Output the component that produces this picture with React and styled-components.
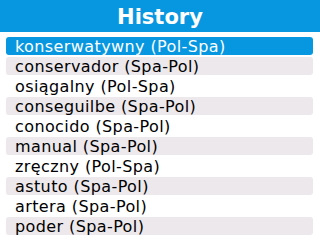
import React from "react";
import styled, { createGlobalStyle } from "styled-components";

const Global = createGlobalStyle`
  html, body { margin: 0; padding: 0; background: #ffffff; }
  body { width: 320px; height: 240px; overflow: hidden; }
`;

const Screen = styled.div`
  width: 320px;
  height: 240px;
  display: flex;
  flex-direction: column;
  background: #ffffff;
  font-family: "DejaVu Sans", Verdana, sans-serif;
`;

const Header = styled.div`
  height: 32px;
  background: #0797e1;
  color: #ffffff;
  display: flex;
  align-items: center;
  justify-content: center;
  font-weight: bold;
  font-size: 21px;
  letter-spacing: 0px;
  padding-top: 1px;
  box-sizing: border-box;
`;

const List = styled.div`
  display: flex;
  flex-direction: column;
  gap: 2px;
  padding: 5px 7px 0 6px;
`;

const Row = styled.div`
  height: 18px;
  border-radius: 3px;
  display: flex;
  align-items: center;
  padding-left: 9px;
  font-size: 16px;
  letter-spacing: 0.4px;
  color: ${(p) => (p.$selected ? "#ffffff" : "#000000")};
  background: ${(p) =>
    p.$selected ? "#0797e1" : p.$shaded ? "#ece8ec" : "transparent"};
  white-space: nowrap;
`;

const items = [
  "konserwatywny (Pol-Spa)",
  "conservador (Spa-Pol)",
  "osiągalny (Pol-Spa)",
  "conseguilbe (Spa-Pol)",
  "conocido (Spa-Pol)",
  "manual (Spa-Pol)",
  "zręczny (Pol-Spa)",
  "astuto (Spa-Pol)",
  "artera (Spa-Pol)",
  "poder (Spa-Pol)",
];

export default function App() {
  return (
    <>
      <Global />
      <Screen>
        <Header>History</Header>
        <List>
          {items.map((t, i) => (
            <Row key={t} $selected={i === 0} $shaded={i % 2 === 1}>
              {t}
            </Row>
          ))}
        </List>
      </Screen>
    </>
  );
}
